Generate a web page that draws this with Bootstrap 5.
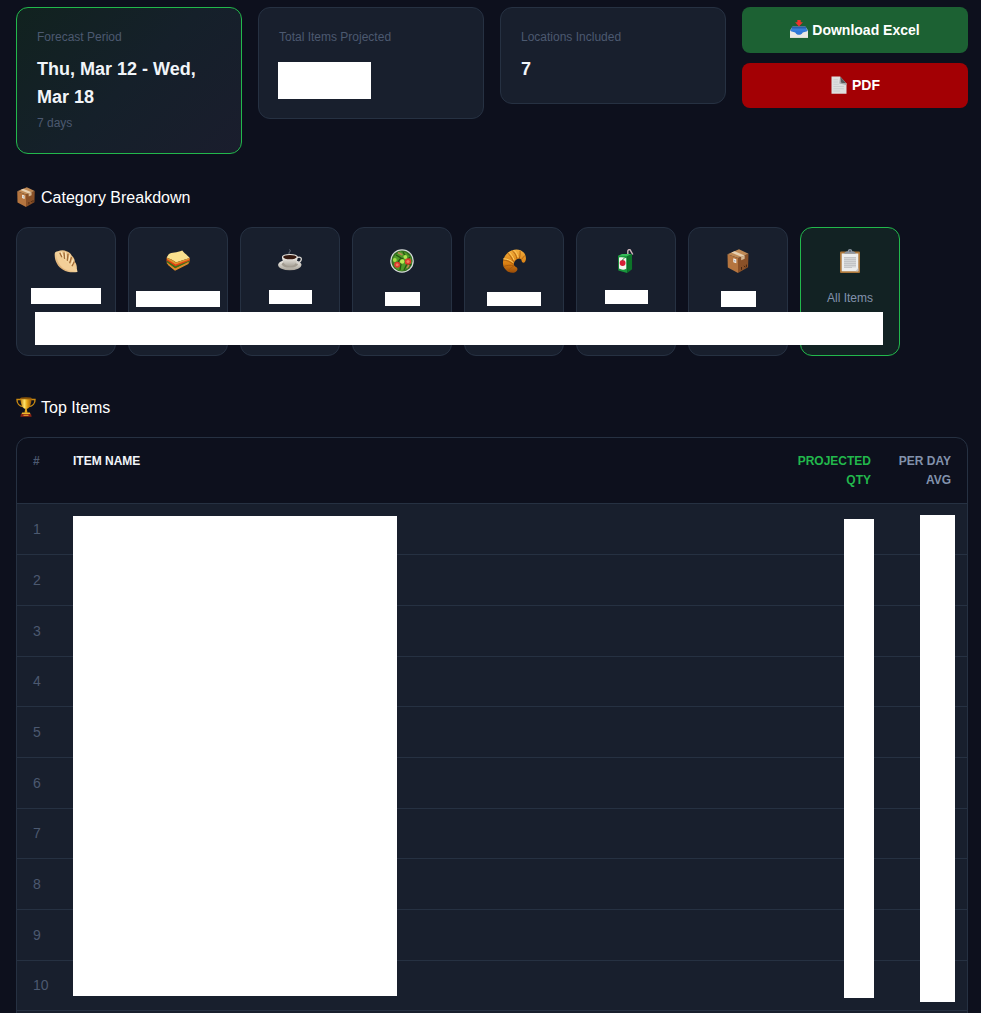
<!DOCTYPE html>
<html lang="en" data-bs-theme="dark">
<head>
<meta charset="utf-8">
<meta name="viewport" content="width=device-width, initial-scale=1">
<title>Forecast</title>
<link href="https://cdn.jsdelivr.net/npm/bootstrap@5.3.0/dist/css/bootstrap.min.css" rel="stylesheet">
<style>
  :root { --panel:#181f2d; --line:#263142; --dim:#4c5970; --soft:#8292ac; --ink:#f1f5f9; --accent:#22b84c; }
  html, body { height:100%; }
  body { background:#0d101d; color:var(--ink); font-family:"Liberation Sans", Arial, sans-serif; font-size:14px; overflow:hidden; }
  .page { padding:7px 13px 0 16px; }
  .stats { --bs-gutter-y:0px; }
  .stat { background:var(--panel); border:1px solid var(--line); border-radius:12px; padding:20px; }
  .stat-on { border-color:var(--accent); background:linear-gradient(135deg,#11221f 0%,#15202a 50%,#1a1d2d 100%); }
  .stat-label, .stat-sub { font-size:12px; line-height:19px; color:var(--dim); }
  .stat-value { font-size:18px; line-height:28px; font-weight:700; margin-top:8px; }
  .stat-sub { margin-top:3px; }
  .mask { background:#fff; }
  .mask-total { width:93px; height:37px; margin:15px 0 -1px -1px; }
  .act-list { row-gap:10px; }
  .act { --bs-btn-color:#fff; --bs-btn-hover-color:#fff; border:0; border-radius:8px; padding:12px; font-size:14px; line-height:22px; font-weight:700; }
  .act svg { width:18px; height:18px; margin-bottom:2px; }
  .act-xls { background:#1c6133; }
  .act-pdf { background:#a30004; line-height:21px; }
  .cat-sect { margin-top:31px; }
  .top-sect { margin-top:39px; }
  .sect { font-size:16px; line-height:26px; font-weight:400; margin:0 0 16px; gap:5px; }
  .sect svg { width:20px; height:20px; margin-bottom:2px; }
  .cats { display:grid; grid-template-columns:repeat(auto-fill,100px); gap:12px; }
  .cat { height:129px; background:var(--panel); border:1px solid var(--line); border-radius:12px; padding:21px 0 0; font-size:12px; line-height:19px; color:var(--soft); }
  .cat svg { width:24px; height:24px; margin-bottom:16px; }
  .cat-on { background:#122223; border-color:var(--accent); }
  .cat .mask { position:absolute; top:62px; height:14px; }
  .cat .mask.low { top:64px; }
  .cat .mask.tall { top:60px; height:16px; }
  .cat .mask.tall.low { top:63px; }
  .w-a { width:70px; } .w-b { width:84px; } .w-c { width:43px; } .w-d { width:35px; } .w-e { width:54px; }
  .mask-counts { position:absolute; left:19px; top:85px; width:848px; height:33px; }
  .board { border:1px solid var(--line); border-radius:12px 12px 0 0; overflow:hidden; }
  .board table { width:100%; border-collapse:separate; border-spacing:0; table-layout:fixed; }
  .board th { font-size:12px; line-height:19px; padding:14px 16px 13px 0; vertical-align:top; border-bottom:1px solid var(--line); }
  .board td { height:51px; padding-bottom:2px; background:var(--panel); border-bottom:1px solid var(--line); font-size:14px; line-height:22px; color:var(--dim); }
  .board tr:nth-child(3n+4) td { height:50px; }
  .board th:first-child, .board td:first-child { padding-left:16px; }
  .c-num { width:56px; } .c-qty { width:100px; } .c-avg { width:80px; }
  .board th.t-dim { color:var(--dim); } .board th.t-qty { color:var(--accent); } .board th.t-avg { color:var(--soft); }
  .mask-col { position:absolute; }
  .m-name { left:56px; top:78px; width:324px; height:480px; }
  .m-qty { right:93px; top:81px; width:30px; height:479px; }
  .m-avg { right:12px; top:77px; width:35px; height:487px; }
</style>
</head>
<body>
<svg class="position-absolute" width="0" height="0" aria-hidden="true">
  <defs>
    <linearGradient id="gold" x1="0" x2="1" y1="0" y2="0"><stop offset="0" stop-color="#b87408"/><stop offset=".35" stop-color="#ffe36a"/><stop offset=".6" stop-color="#e5a416"/><stop offset="1" stop-color="#965508"/></linearGradient>
    <linearGradient id="crust" x1="0" x2="0" y1="0" y2="1"><stop offset="0" stop-color="#f5b03e"/><stop offset=".6" stop-color="#d97f12"/><stop offset="1" stop-color="#984b08"/></linearGradient>
    <linearGradient id="dough" x1="0" x2="1" y1="1" y2="0"><stop offset="0" stop-color="#c99155"/><stop offset=".5" stop-color="#f4d39d"/><stop offset="1" stop-color="#d9a768"/></linearGradient>
    <linearGradient id="china" x1="0" x2="0" y1="0" y2="1"><stop offset="0" stop-color="#f5f3ee"/><stop offset="1" stop-color="#a8a399"/></linearGradient>
    <linearGradient id="tray" x1="0" x2="0" y1="0" y2="1"><stop offset="0" stop-color="#1c4f9d"/><stop offset="1" stop-color="#4a9bf5"/></linearGradient>
  </defs>
  <symbol id="i-box" viewBox="0 0 24 24">
    <path d="M1.500 5.200 12 9v15L1.800 18.600Z" fill="#b5753f"/><path d="M12 9l10.500-4.200-.4 13.400L12 24Z" fill="#8a5128"/>
    <path d="M1.500 5.200 13 .3l9.500 4.500L12 9Z" fill="#c08a55"/>
    <path d="M5.300 3.600 8.600 2.200 18.700 6.400 15.200 7.800Z" fill="#e6cfb0"/><path d="M15.200 7.800l3.500-1.400v3.400l-3.500 1.500Z" fill="#d3b590"/>
    <path d="M7.300 9.200l3 1.100v4l-3-1.100Z" fill="#f2efe9"/><path d="M8.200 11l1.200.5v1.200l-1.200-.5Z" fill="#8d9399"/>
    <path d="M15.500 18v2.800M18 16.800l1.200 1.500M20.400 15.600v2.600" stroke="#472610" stroke-width="1"/>
  </symbol>
  <symbol id="i-cup" viewBox="0 0 24 24">
    <path d="M6 3H1.200c-.3 4.800 3 8 7.200 8.600M18 3h4.800c.3 4.800-3 8-7.200 8.600" fill="none" stroke="#c98a12" stroke-width="1.700"/>
    <path d="M5.300 1.200h13.400C18.600 9 16 14.500 12 14.500S5.400 9 5.300 1.200Z" fill="url(#gold)"/>
    <ellipse cx="12" cy="1.500" rx="6.700" ry="1.300" fill="#8d5708"/>
    <path d="M11 14h2l.7 5h-3.400Z" fill="#dfa01a"/><path d="M7.500 18.500h9l1.300 2.700H6.200Z" fill="#f0b72d"/>
    <path d="M6 20.500h12l.8 3.300H5.200Z" fill="#8b2415"/><path d="M9 21.300h6v1.300H9z" fill="#e7a92c"/>
  </symbol>
  <symbol id="i-dumpling" viewBox="0 0 24 24">
    <path d="M.7 5C.8 3 2 2.700 4 2.300 6.500 1 10 .8 12.500 2.200c2.700.6 4.500 2.300 5.300 4.500 2 1.600 3 3.700 3 6 1.500 2 2.200 4 2 6.500l.7 3.800c-5 .8-10.500.4-14.500-2.200C4 18 .4 12.500.7 5Z" fill="url(#dough)"/>
    <path d="M3 5.500c4 3 10 11.500 19 16-3 1-9 .2-12.400-2C5.200 16.500 2.600 11 3 5.500Z" fill="#f3cf98"/>
    <path d="M6 4.300l1.700 3.400M10 4 10.600 9.300M14 5.200l-.6 6M17.300 8.700l-1.500 5M20 13.200l-1.800 3.500" stroke="#a26c38" stroke-width="1.400" stroke-linecap="round" fill="none"/>
    <path d="M7.300 3.200l1.500 4M11.700 3.600l.2 5.500M16 6l-1 5.500M19.200 10.500l-1.600 4.600" stroke="#ffeac2" stroke-width="1" stroke-linecap="round"/>
  </symbol>
  <symbol id="i-sandwich" viewBox="0 0 24 24">
    <path d="M.6 10.500 9.500 14l14.300-3.300-.7 3.300L9 21.200.8 14.500Z" fill="#cc7a20"/>
    <path d="M.7 9 9.300 15l14.400-6-.3 2.600-13.900 6.300L.7 11.600Z" fill="#e63c14"/>
    <path d="M1 11.500l8.400 5.700 13.800-5.500-.1 1.700-14 6L1 13.300Z" fill="#3f6d17"/>
    <path d="M1.500 14l7.700 5.500 13.500-6.700-.3 2.200L9 21.800 2 16Z" fill="#d98b2c"/>
    <path d="M2.500 5.400C6 3 10.500 4 16.300 1.600c1.300 2.500 5.500 4.400 7.400 7.500L9.800 13.400C8 11.200 3 9.800.7 8.500Z" fill="#f9e08e"/>
    <path d="M.7 8.500c2.300 1.300 7.300 2.700 9.100 4.900l13.900-4.300-.2 1.500L9.600 15.500.8 10Z" fill="#de942b"/>
  </symbol>
  <symbol id="i-coffee" viewBox="0 0 24 24">
    <path d="M11.500 5c-2-1.500 2.200-2.300.1-4.500" fill="none" stroke="#7d8894" stroke-width=".8"/>
    <ellipse cx="11.800" cy="16" rx="11.700" ry="5.300" fill="url(#china)"/><ellipse cx="11.800" cy="15.300" rx="8" ry="3.300" fill="#a29c91"/>
    <path d="M19 8.600c3.600-1.200 5 .5 4 2.800-.8 1.800-3 2.500-5 2.400" fill="none" stroke="#d7d5d0" stroke-width="1.300"/>
    <path d="M4 7.800h15.700c-.1 5-2.500 9.400-7.800 9.400S4.100 12.900 4 7.800Z" fill="url(#china)"/>
    <ellipse cx="11.900" cy="7.900" rx="7.900" ry="2.900" fill="#ece9e3"/><ellipse cx="11.900" cy="8.100" rx="6.800" ry="2.200" fill="#371a10"/>
  </symbol>
  <symbol id="i-salad" viewBox="0 0 24 24">
    <circle cx="12" cy="12" r="11.800" fill="#d7dcdb"/><circle cx="12" cy="12" r="10.600" fill="#356e20"/>
    <path d="M3 10c2-6 6-5 7-8 3 2 6 0 8 4 4 2 3 6 4 8-3 1-3 6-8 7-4 2-9-1-10-5Z" fill="#4f9a29"/>
    <path d="M6 6l5 3-3 4M13 3l3 5-5 2M20 8l-5 5M5 13l6 2-1 6M14 21l3-6 4 1" fill="none" stroke="#265512" stroke-width="1.300"/>
    <path d="M8 3.500 12.500 6M17 19l2-3" stroke="#b7884e" stroke-width="1.500"/>
    <circle cx="7.200" cy="15.700" r="3" fill="#dc3a2c"/><circle cx="7.200" cy="15.700" r="1.500" fill="#ef7b5d"/><circle cx="18" cy="12.500" r="3.200" fill="#dc3a2c"/><circle cx="18" cy="12.500" r="1.600" fill="#ef7b5d"/>
    <circle cx="12.200" cy="12.500" r="2.200" fill="#b9ec55"/><circle cx="4.800" cy="11" r="1.900" fill="#a4df48"/><circle cx="15.300" cy="8" r="1.900" fill="#b0e653"/>
  </symbol>
  <symbol id="i-croissant" viewBox="0 0 24 24">
    <path d="M4.500 21.500C-1 17 .3 8.500 5.500 4c5-4.500 12.500-5 16.500-.2 2 2.500 2.600 6.700 1.200 8.700-1.200 2-3.200 1.300-3.500-.4-.2-1.300-1-2.400-2.300-2.500-2.500-.1-5.400 2.900-5.600 5.300-.1 2 1.500 2.600 2.600 3.400 1.800 1.300 1.200 3.600-1.200 4.900-2.600 1.300-6.200.5-8.700-1.700Z" fill="url(#crust)"/>
    <path d="M5.500 3.800c2.200 2 4.500 5.300 6 9.200M10 1.400c2.500 2 4.300 5 5 8.500M18 1.800c.3 2.800 0 5.300-.8 7.800M22.800 6.500l-3.600 4.200M1 11c4 .2 7.500 1.800 10.600 4.500M1.700 17.500c3.500-1.400 6.700-1.500 10-.8M6 22.300c1.200-2 3-3.700 5.900-5.300" fill="none" stroke="#a3570c" stroke-width=".8"/>
    <path d="M7 3.200c2.300 2.300 4 4.800 5.200 8M1.300 9.800c4 0 7.300 1.500 10 3.800M12 1.300c2.200 2 3.500 4.300 4.100 7" fill="none" stroke="#ffce63" stroke-width="1"/>
  </symbol>
  <symbol id="i-juice" viewBox="0 0 24 24">
    <path d="M13.800 6V2.200c0-1.200 1.300-2 2.300-1.400L18.800 5.500" fill="none" stroke="#cfb7bd" stroke-width="1.400"/>
    <path d="M4 6.700 8 5h9.800L14 7.500Z" fill="#37bd5a"/><path d="M4 6.700 13.200 7v17L4.300 21.600Z" fill="#19963c"/><path d="M13.200 7l4.800-2 .1 15.200-4.900 3.800Z" fill="#0d7429"/>
    <path d="M5 8.500c2.500-.5 5-.2 7.200.8v10.500c-2.500 1.700-5 1-7.200-.2Z" fill="#f4f4ee"/>
    <circle cx="8.600" cy="14" r="2.900" fill="#d51e35"/><path d="M8.500 11.500c.3-1.300 1-2 2-2.200" stroke="#28782f" stroke-width="1" fill="none"/>
  </symbol>
  <symbol id="i-clip" viewBox="0 0 24 24">
    <rect x="2" y="2.500" width="20" height="21.500" rx="1" fill="#ad773a"/><path d="M3.700 4.500h16.600v17.800H3.700z" fill="#eceded"/>
    <path d="M6 8h12v10.500H6z" fill="#d3d5d6"/><path d="M6 8.500h12M6 10.500h12M6 12.500h12M6 14.500h12M6 16.500h12M6 18.500h8" stroke="#bfc1c3" stroke-width=".9"/>
    <path d="M6.300 4.800c0-1.800 1.400-2.300 3.500-2.500 0-1.300 1-2.200 2.200-2.200s2.200.9 2.200 2.200c2.100.2 3.500.7 3.500 2.500Z" fill="#8d96a2"/><circle cx="12" cy="2" r=".8" fill="#3e454d"/>
    <path d="M17.500 22.300 20.300 19v3.300Z" fill="#c4c5c7"/>
  </symbol>
  <symbol id="i-inbox" viewBox="0 0 24 24">
    <path d="M3.500 8.500h17L24 14v9.500H0V14Z" fill="#dedbd4"/><path d="M3 8.500h18L23.500 15H.5Z" fill="url(#tray)"/>
    <path d="M.7 13.500h22.600l-.8 3L17 17.500c-1.500 3.500-8.500 3.500-10 0L1.500 16.500Z" fill="#2f78d7"/><path d="M0 14.500 7 16.500c1.500 4.200 8.500 4.200 10 0l7-2v9H0Z" fill="#eae8e3"/>
    <path d="M9.800 0h4.400v3h3L12 8.500 6.800 3h3Z" fill="#f0322c"/>
  </symbol>
  <symbol id="i-page" viewBox="0 0 24 24">
    <path d="M2 .5h11.500L22 10v13.500H2Z" fill="#dedfdf"/><path d="M13.500.5 22 10l-7.800-1Z" fill="#57595b"/><path d="M13.500.5 14.200 9 22 10v2L12.500 10Z" fill="#a1a3a5"/>
    <path d="M4.500 5h6M4.500 8h6M4.500 11h7M4.500 14h14M4.500 17h14M4.500 20h9" stroke="#c3c5c7" stroke-width="1"/>
  </symbol>
</svg>

<main class="page">
  <section class="row g-3 stats align-items-start">
    <div class="col-3"><div class="stat stat-on">
      <div class="stat-label">Forecast Period</div>
      <div class="stat-value">Thu, Mar 12 - Wed, Mar 18</div>
      <div class="stat-sub">7 days</div>
    </div></div>
    <div class="col-3"><div class="stat">
      <div class="stat-label">Total Items Projected</div>
      <div class="mask mask-total"></div>
    </div></div>
    <div class="col-3"><div class="stat">
      <div class="stat-label">Locations Included</div>
      <div class="stat-value">7</div>
    </div></div>
    <div class="col-3 d-grid act-list">
      <button type="button" class="btn act act-xls d-flex align-items-center justify-content-center gap-1"><svg aria-hidden="true"><use href="#i-inbox"/></svg>Download Excel</button>
      <button type="button" class="btn act act-pdf d-flex align-items-center justify-content-center gap-1"><svg aria-hidden="true"><use href="#i-page"/></svg>PDF</button>
    </div>
  </section>

  <section class="cat-sect">
    <h2 class="sect d-flex align-items-center"><svg aria-hidden="true"><use href="#i-box"/></svg>Category Breakdown</h2>
    <div class="cats position-relative">
      <button type="button" class="cat position-relative d-flex flex-column align-items-center" aria-label="Category 1"><svg><use href="#i-dumpling"/></svg><span class="mask tall w-a"></span></button>
      <button type="button" class="cat position-relative d-flex flex-column align-items-center" aria-label="Category 2"><svg><use href="#i-sandwich"/></svg><span class="mask tall w-b low"></span></button>
      <button type="button" class="cat position-relative d-flex flex-column align-items-center" aria-label="Category 3"><svg><use href="#i-coffee"/></svg><span class="mask w-c"></span></button>
      <button type="button" class="cat position-relative d-flex flex-column align-items-center" aria-label="Category 4"><svg><use href="#i-salad"/></svg><span class="mask w-d low"></span></button>
      <button type="button" class="cat position-relative d-flex flex-column align-items-center" aria-label="Category 5"><svg><use href="#i-croissant"/></svg><span class="mask w-e low"></span></button>
      <button type="button" class="cat position-relative d-flex flex-column align-items-center" aria-label="Category 6"><svg><use href="#i-juice"/></svg><span class="mask w-c"></span></button>
      <button type="button" class="cat position-relative d-flex flex-column align-items-center" aria-label="Category 7"><svg><use href="#i-box"/></svg><span class="mask tall w-d low"></span></button>
      <button type="button" class="cat cat-on d-flex flex-column align-items-center"><svg aria-hidden="true"><use href="#i-clip"/></svg>All Items</button>
      <div class="mask mask-counts"></div>
    </div>
  </section>

  <section class="top-sect">
    <h2 class="sect d-flex align-items-center"><svg aria-hidden="true"><use href="#i-cup"/></svg>Top Items</h2>
    <div class="board position-relative">
      <table>
        <colgroup><col class="c-num"><col><col class="c-qty"><col class="c-avg"></colgroup>
        <thead><tr><th class="t-dim">#</th><th>ITEM NAME</th><th class="t-qty text-end">PROJECTED QTY</th><th class="t-avg text-end">PER DAY AVG</th></tr></thead>
        <tbody>
          <tr><td>1</td><td></td><td></td><td></td></tr>
          <tr><td>2</td><td></td><td></td><td></td></tr>
          <tr><td>3</td><td></td><td></td><td></td></tr>
          <tr><td>4</td><td></td><td></td><td></td></tr>
          <tr><td>5</td><td></td><td></td><td></td></tr>
          <tr><td>6</td><td></td><td></td><td></td></tr>
          <tr><td>7</td><td></td><td></td><td></td></tr>
          <tr><td>8</td><td></td><td></td><td></td></tr>
          <tr><td>9</td><td></td><td></td><td></td></tr>
          <tr><td>10</td><td></td><td></td><td></td></tr>
          <tr><td></td><td></td><td></td><td></td></tr>
        </tbody>
      </table>
      <div class="mask mask-col m-name"></div>
      <div class="mask mask-col m-qty"></div>
      <div class="mask mask-col m-avg"></div>
    </div>
  </section>
</main>
<script src="https://cdn.jsdelivr.net/npm/bootstrap@5.3.0/dist/js/bootstrap.bundle.min.js"></script>
</body>
</html>
